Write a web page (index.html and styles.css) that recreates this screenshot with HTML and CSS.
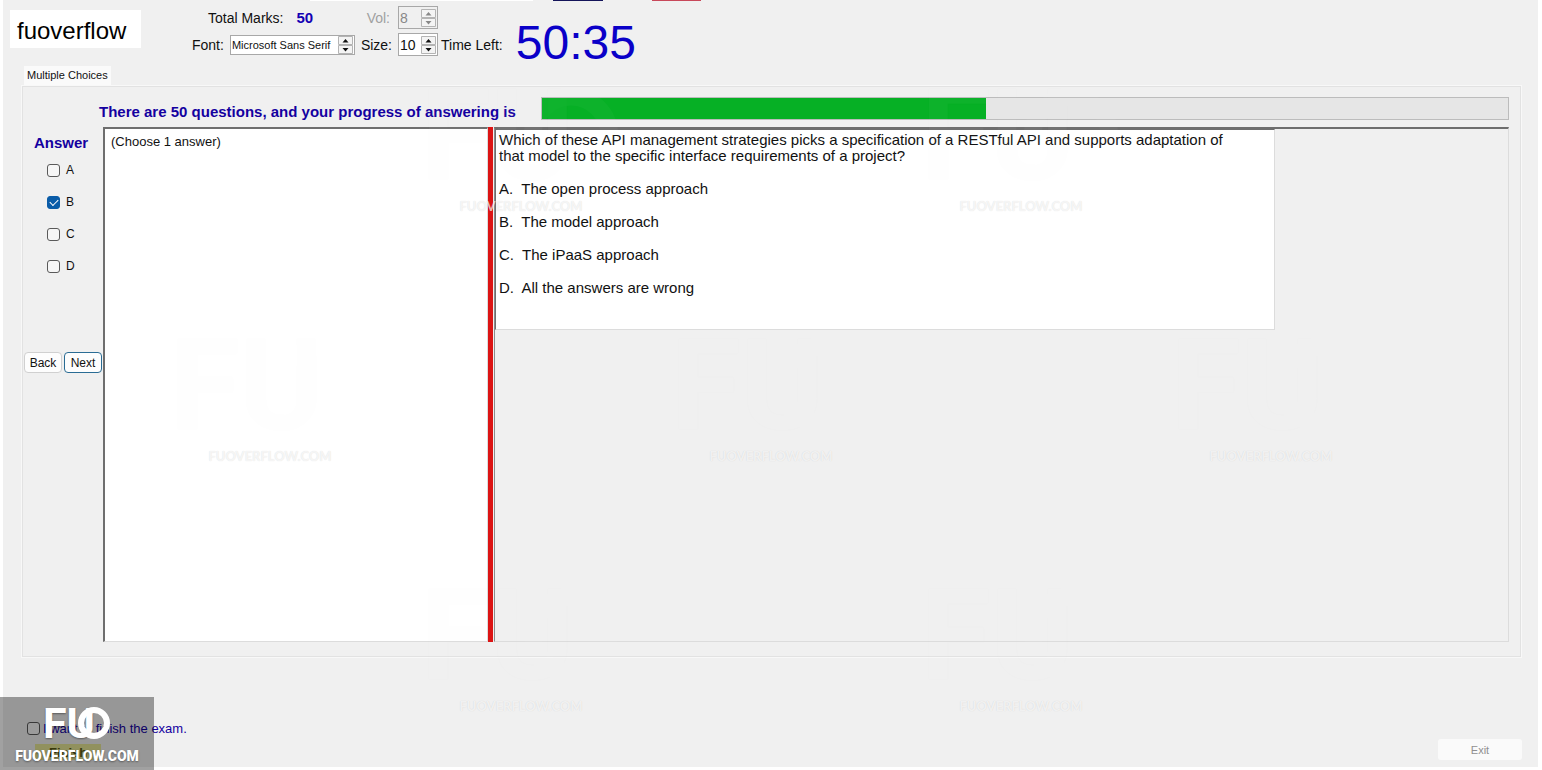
FILE: index.html
```
<!DOCTYPE html>
<html lang="en">
<head>
  <meta charset="UTF-8" />
  <meta name="viewport" content="width=device-width, initial-scale=1.0" />
  <title>Exam - Multiple Choices</title>
  <link rel="stylesheet" href="styles.css">
</head>
<body>
  <svg class="defs" aria-hidden="true">
    <symbol id="spin-arrows" viewBox="0 0 15 18">
      <path d="M0.5 0.5h14v8h-14zM0.5 9.5h14v8h-14z" fill="#f4f4f4" stroke="#b4b4b4"/>
      <path d="M4.5 6.5L7.5 3L10.5 6.5zM4.5 12L7.5 15.5L10.5 12z" fill="currentColor"/>
    </symbol>
  </svg>

  <div class="app">
    <div class="top-strip"><i class="white"></i><i class="navy"></i><i class="red"></i></div>

    <header class="toolbar">
      <div class="brand">fuoverflow</div>
      <div class="fields">
        <div class="field-row marks-row">
          <span>Total Marks:</span>
          <b class="marks">50</b>
          <label class="muted vol-label" for="vol">Vol:</label>
          <span class="spinner disabled">
            <input id="vol" type="text" value="8" disabled>
            <svg class="arrows"><use href="#spin-arrows"/></svg>
          </span>
        </div>
        <div class="field-row">
          <label for="font">Font:</label>
          <span class="spinner font-spinner">
            <select id="font"><option>Microsoft Sans Serif</option></select>
            <svg class="arrows"><use href="#spin-arrows"/></svg>
          </span>
          <label for="size">Size:</label>
          <span class="spinner">
            <input id="size" type="text" value="10">
            <svg class="arrows"><use href="#spin-arrows"/></svg>
          </span>
        </div>
      </div>
      <span class="time-label">Time Left:</span>
      <span class="clock">50:35</span>
    </header>

    <main class="tabs">
      <button class="tab">Multiple Choices</button>
      <section class="panel">
        <div class="progress-row">
          <label for="progress">There are 50 questions, and your progress of answering is</label>
          <progress id="progress" value="23" max="50"></progress>
        </div>
        <div class="work">
          <aside class="answers">
            <h2>Answer</h2>
            <label><input type="checkbox">A</label>
            <label><input type="checkbox" checked>B</label>
            <label><input type="checkbox">C</label>
            <label><input type="checkbox">D</label>
            <div class="nav">
              <button>Back</button>
              <button class="focused">Next</button>
            </div>
          </aside>
          <textarea class="hint" aria-label="Hint" readonly>(Choose 1 answer)</textarea>
          <div class="splitter"></div>
          <div class="viewer">
            <article class="question">
              <p>Which of these API management strategies picks a specification of a RESTful API and supports adaptation of<br>that model to the specific interface requirements of a project?</p>
              <p>A.&nbsp; The open process approach</p>
              <p>B.&nbsp; The model approach</p>
              <p>C.&nbsp; The iPaaS approach</p>
              <p>D.&nbsp; All the answers are wrong</p>
            </article>
          </div>
        </div>
      </section>
    </main>

    <footer class="bottom">
      <div class="finish">
        <label><input type="checkbox">I want to finish the exam.</label>
        <button class="finish-btn">Finish</button>
      </div>
      <button class="exit" disabled>Exit</button>
    </footer>
  </div>

  <div class="watermarks" aria-hidden="true">
    <div class="mark m1"><svg viewBox="0 0 68 34"><use href="#logo"/></svg>FUOVERFLOW.COM</div>
    <div class="mark m2"><svg viewBox="0 0 68 34"><use href="#logo"/></svg>FUOVERFLOW.COM</div>
    <div class="mark m3"><svg viewBox="0 0 68 34"><use href="#logo"/></svg>FUOVERFLOW.COM</div>
    <div class="mark m4"><svg viewBox="0 0 68 34"><use href="#logo"/></svg>FUOVERFLOW.COM</div>
    <div class="mark m5"><svg viewBox="0 0 68 34"><use href="#logo"/></svg>FUOVERFLOW.COM</div>
    <div class="mark m6"><svg viewBox="0 0 68 34"><use href="#logo"/></svg>FUOVERFLOW.COM</div>
    <div class="mark m7"><svg viewBox="0 0 68 34"><use href="#logo"/></svg>FUOVERFLOW.COM</div>
  </div>
  <div class="stamp">
    <svg viewBox="0 0 68 34">
      <g id="logo">
        <text class="logo-letter" y="32">FU</text>
        <circle cx="51" cy="17" r="13" fill="none" stroke="currentColor" stroke-width="6"/>
      </g>
    </svg>
    <span>FUOVERFLOW.COM</span>
  </div>
</body>
</html>
```

FILE: styles.css
```
* {
  box-sizing: border-box;
}
body {
  margin: 0;
  background: #fff;
  color: #111;
  font-family: "Liberation Sans", Arial, sans-serif;
  font-size: 14px;
  position: relative;
}
.defs {
  position: absolute;
  width: 0;
  height: 0;
}
button, input, select, textarea {
  font-family: inherit;
  color: inherit;
}
.app {
  display: flex;
  flex-direction: column;
  min-height: calc(100vh - 3px);
  margin: 0 4px 3px 3px;
  background: #f0f0f0;
}

/* bottom edge of the window buttons */
.top-strip {
  display: flex;
  height: 1px;
  padding-left: 307px;
}
.top-strip .white {
  width: 223px;
  margin-right: 20px;
  background: #fff;
}
.top-strip .navy {
  width: 50px;
  margin-right: 49px;
  background: #14145a;
}
.top-strip .red {
  width: 49px;
  background: #c8485a;
}

/* toolbar */
.toolbar {
  display: flex;
  align-items: flex-end;
  height: 55px;
  padding-left: 7px;
}
.brand {
  width: 131px;
  height: 38px;
  margin: 0 51px 8px 0;
  padding-left: 7px;
  background: #fff;
  color: #000;
  font-size: 24px;
  line-height: 42px;
}
.fields {
  width: 246px;
}
.field-row {
  display: flex;
  align-items: center;
  justify-content: space-between;
  height: 23px;
}
.field-row + .field-row {
  margin-top: 4px;
}
.marks-row {
  justify-content: flex-start;
  padding-left: 16px;
}
.marks {
  margin-left: 13px;
  color: #1400b4;
  font-size: 15px;
}
.muted {
  color: #a0a0a0;
}
.vol-label {
  margin: 0 8px 0 auto;
}
.spinner {
  display: flex;
  align-items: center;
  width: 40px;
  height: 23px;
  padding-right: 1px;
  border: 1px solid #a8a8a8;
  background: #fff;
}
.spinner input,
.spinner select {
  flex: 1;
  width: 0;
  padding: 0 0 0 1px;
  border: 0;
  background: none;
  font-size: 14px;
  appearance: none;
  outline: 0;
}
.spinner .arrows {
  width: 15px;
  height: 18px;
  color: #111;
}
.font-spinner {
  width: 125px;
  height: 20px;
}
.spinner select {
  font-size: 11px;
}
.disabled {
  background: #f0f0f0;
}
.disabled input,
.disabled .arrows {
  color: #888;
}
.time-label {
  margin: 0 13px 3px 3px;
  line-height: 16px;
}
.clock {
  color: #0a00c8;
  font-size: 48px;
  line-height: 26px;
}

/* tab page */
.tabs {
  padding: 10px 17px 0 19px;
}
.tab {
  display: block;
  height: 20px;
  margin-left: 2px;
  padding: 0 3px 2px 3px;
  border: 0;
  background: #fafafa;
  font-size: 11px;
}
.panel {
  padding: 9px 11px 14px 0;
  border: 1px solid #e2e2e2;
  outline: 1px solid #f8f8f8;
}
.progress-row {
  display: flex;
  align-items: center;
  gap: 16px;
  height: 24px;
  margin-left: 76px;
}
.progress-row label {
  min-width: 426px;
  padding-top: 6px;
  color: #1400a0;
  font-size: 15px;
  font-weight: bold;
}
progress {
  flex: 1;
  height: 23px;
  border: 1px solid #bcbcbc;
  background: #e6e6e6;
  appearance: none;
}
progress::-webkit-progress-bar {
  background: #e6e6e6;
}
progress::-webkit-progress-value {
  background: #06b025;
}
.work {
  display: flex;
  height: 515px;
  margin-top: 7px;
}
.answers {
  display: flex;
  flex-direction: column;
  width: 80px;
}
.answers h2 {
  margin: 8px 0 10px 11px;
  color: #1400a0;
  font-size: 15px;
  line-height: 16px;
}
.answers label {
  display: flex;
  align-items: center;
  gap: 6px;
  height: 18px;
  margin: 0 0 14px 24px;
  font-size: 12px;
}
input[type="checkbox"] {
  appearance: none;
  width: 13px;
  height: 13px;
  margin: 0;
  border: 1px solid #5a5a5a;
  border-radius: 3px;
  background: #f6f6f6;
}
input[type="checkbox"]:checked {
  border-color: #0a5ca8;
  background: #0a5ca8;
}
input[type="checkbox"]:checked::after {
  content: "";
  display: block;
  width: 7px;
  height: 4px;
  margin: 2px;
  border: solid #fff;
  border-width: 0 0 1px 1px;
  transform: rotate(-45deg);
}
.nav {
  display: flex;
  gap: 2px;
  margin: 63px 0 0 1px;
}
.nav button {
  width: 38px;
  height: 21px;
  padding: 0;
  border: 1px solid #d0d0d0;
  border-radius: 4px;
  background: #fdfdfd;
  font-size: 12px;
}
.nav .focused {
  border-color: #2a6c94;
}
.hint {
  width: 385px;
  padding: 5px 6px;
  border: 1px solid #dcdcdc;
  border-top: 2px solid #6e6e6e;
  border-left: 2px solid #6e6e6e;
  background: #fff;
  font-size: 13px;
  resize: none;
  outline: 0;
}
.splitter {
  width: 5px;
  background: #dc1414;
}
.viewer {
  flex: 1;
  margin-left: 1px;
  border: 1px solid #dcdcdc;
  border-top: 2px solid #6e6e6e;
  border-left: 1px solid #8c8c8c;
}
.question {
  width: 77%;
  min-height: 201px;
  padding: 2px 3px;
  border: 1px solid #dcdcdc;
  border-top-color: #6e6e6e;
  border-left-color: #6e6e6e;
  background: #fff;
  font-size: 15px;
  line-height: 16px;
  white-space: nowrap;
}
.question p {
  margin: 0 0 17px;
}

/* bottom bar */
.bottom {
  display: flex;
  justify-content: space-between;
  align-items: flex-end;
  margin-top: auto;
  padding: 0 16px 7px 24px;
}
.finish label {
  display: flex;
  align-items: center;
  gap: 3px;
  color: #1400a0;
  font-size: 13px;
}
.finish-btn {
  display: block;
  height: 16px;
  margin: 8px 0 0 8px;
  padding: 0 14px;
  border: 0;
  background: #e6e696;
  color: #5a5a14;
  font-size: 13px;
  font-weight: bold;
}
.exit {
  width: 84px;
  height: 21px;
  border: 0;
  border-radius: 3px;
  background: #fafafa;
  color: #909090;
  font-size: 11px;
}

/* watermark laid over the whole window */
.logo-letter {
  font-family: Roboto, sans-serif;
  font-size: 43px;
  font-weight: bold;
  fill: currentColor;
  stroke: none;
}
.watermarks {
  position: absolute;
  inset: 0;
  overflow: hidden;
  pointer-events: none;
}
.mark {
  position: absolute;
  width: 200px;
  color: rgba(255, 255, 255, 0.7);
  font-family: Lato, sans-serif;
  font-size: 13px;
  font-weight: bold;
  line-height: 16px;
  text-align: center;
  text-shadow: 0 0 1px rgba(0, 0, 0, 0.14);
}
.mark svg {
  display: block;
  width: 200px;
  height: 100px;
  margin-bottom: 13px;
  opacity: 0.04;
}
.m1 { left: 421px; top: 85px; }
.m2 { left: 921px; top: 85px; }
.m3 { left: 170px; top: 335px; }
.m4 { left: 671px; top: 335px; }
.m5 { left: 1171px; top: 335px; }
.m6 { left: 421px; top: 585px; }
.m7 { left: 921px; top: 585px; }
.stamp {
  position: absolute;
  left: 0;
  bottom: 0;
  display: flex;
  flex-direction: column;
  align-items: center;
  width: 154px;
  height: 73px;
  padding-top: 9px;
  background: rgba(0, 0, 0, 0.37);
  color: #fff;
  font-family: Roboto, sans-serif;
  font-size: 14px;
  font-weight: 900;
  line-height: 16px;
  text-shadow: 0 1px 2px rgba(0, 0, 0, 0.4);
  pointer-events: none;
}
.stamp svg {
  width: 68px;
  height: 34px;
  margin-bottom: 8px;
}
```
